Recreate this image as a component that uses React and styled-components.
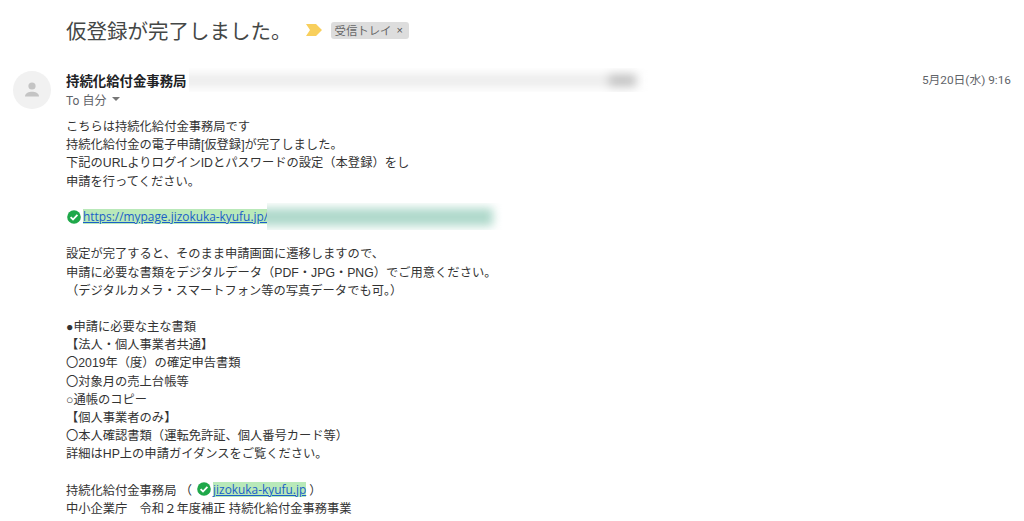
import styled, { createGlobalStyle } from "styled-components";

const lines1 = [
  "こちらは持続化給付金事務局です",
  "持続化給付金の電子申請[仮登録]が完了しました。",
  "下記のURLよりログインIDとパスワードの設定（本登録）をし",
  "申請を行ってください。",
];
const lines2 = [
  "設定が完了すると、そのまま申請画面に遷移しますので、",
  "申請に必要な書類をデジタルデータ（PDF・JPG・PNG）でご用意ください。",
  "（デジタルカメラ・スマートフォン等の写真データでも可。）",
];
const lines3 = [
  "●申請に必要な主な書類",
  "【法人・個人事業者共通】",
  "〇2019年（度）の確定申告書類",
  "〇対象月の売上台帳等",
  "○通帳のコピー",
  "【個人事業者のみ】",
  "〇本人確認書類（運転免許証、個人番号カード等）",
  "詳細はHP上の申請ガイダンスをご覧ください。",
];

const CheckIcon = () => (
  <svg width="14" height="14" viewBox="0 0 14 14">
    <circle cx="7" cy="7" r="6.8" fill="#1fa84a" />
    <path d="M3.6 7.2l2.4 2.3 4.4-4.6" fill="none" stroke="#fff" strokeWidth="1.8" />
  </svg>
);

const App = () => {
  return (
    <>
      <GlobalStyle />
      <StPage>
        <StSubjectRow>
          <StSubject>仮登録が完了しました。</StSubject>
          <StMarker width="16" height="12" viewBox="0 0 16 12">
            <path d="M0 0h10l6 6-6 6H0l4-6z" fill="#f8cf5c" />
          </StMarker>
          <StChip>受信トレイ<StChipClose>×</StChipClose></StChip>
        </StSubjectRow>
        <StMessage>
          <StAvatar>
            <svg width="20" height="20" viewBox="0 0 20 20">
              <circle cx="10" cy="6" r="3.6" fill="#c4c4c4" />
              <path d="M3 16.5c0-3.4 4-4.8 7-4.8s7 1.4 7 4.8z" fill="#c4c4c4" />
            </svg>
          </StAvatar>
          <StContent>
            <StHeader>
              <StSenderBlock>
                <StSenderRow>
                  <StSender>持続化給付金事務局</StSender>
                  <StSenderMask>
                    <StSenderBlur><StBlurBlob /></StSenderBlur>
                  </StSenderMask>
                </StSenderRow>
                <StTo>To 自分<StCaret /></StTo>
              </StSenderBlock>
              <StDate>5月20日(水) 9:16</StDate>
            </StHeader>
            <StBody>
              {lines1.map((line) => <StLine key={line}>{line}</StLine>)}
              <StLine />
              <StLinkLine>
                <StLinkIcon><CheckIcon /></StLinkIcon>
                <StLinkWrap>
                  <StLink>https://mypage.jizokuka-kyufu.jp/c</StLink>
                  <StLinkMask><StLinkBlur /></StLinkMask>
                </StLinkWrap>
              </StLinkLine>
              <StLine />
              {lines2.map((line) => <StLine key={line}>{line}</StLine>)}
              <StLine />
              {lines3.map((line) => <StLine key={line}>{line}</StLine>)}
              <StLine />
              <StLinkLine>
                <span>持続化給付金事務局 （</span>
                <StFooterIcon><CheckIcon /></StFooterIcon>
                <StLinkWrap>
                  <StLink>jizokuka-kyufu.jp</StLink>
                </StLinkWrap>
                <StClose>）</StClose>
              </StLinkLine>
              <StLine>中小企業庁　令和２年度補正 持続化給付金事務事業</StLine>
            </StBody>
          </StContent>
        </StMessage>
      </StPage>
    </>
  );
};

export default App;

const GlobalStyle = createGlobalStyle`
  html, body {
    margin: 0;
    padding: 0;
    height: 521px;
    overflow: hidden;
    background: #fff;
  }
`;
const StPage = styled.div`
  width: 1024px;
  height: 521px;
  overflow: hidden;
  font-family: "Liberation Sans", "Noto Sans CJK JP", sans-serif;
  color: #333;
`;
const StSubjectRow = styled.div`
  display: flex;
  align-items: center;
  height: 60px;
  padding-left: 66px;
`;
const StSubject = styled.h1`
  margin: 0;
  font-size: 20.5px;
  font-weight: 400;
  color: #444746;
  font-family: "Noto Sans CJK JP", sans-serif;
`;
const StMarker = styled.svg`
  margin-left: 14px;
`;
const StChip = styled.span`
  display: flex;
  align-items: center;
  height: 17px;
  margin-left: 9px;
  padding: 0 6px 0 4px;
  border-radius: 3px;
  background: #dddddd;
  color: #666;
  font-size: 11.4px;
`;
const StChipClose = styled.span`
  margin-left: 5px;
  font-size: 11px;
  color: #555;
`;
const StMessage = styled.div`
  display: flex;
  padding: 11px 13px 0;
`;
const StAvatar = styled.div`
  display: flex;
  flex: none;
  align-items: center;
  justify-content: center;
  width: 38px;
  height: 38px;
  border-radius: 50%;
  background: #f1f1f1;
`;
const StContent = styled.div`
  flex: 1;
  margin-left: 15px;
`;
const StHeader = styled.div`
  display: flex;
  justify-content: space-between;
`;
const StSenderBlock = styled.div`
  display: flex;
  flex-direction: column;
`;
const StSenderRow = styled.div`
  display: flex;
  align-items: center;
  height: 18px;
`;
const StSender = styled.span`
  font-size: 13.4px;
  font-weight: 700;
  color: #202124;
`;
const StSenderMask = styled.div`
  flex: none;
  width: 470px;
  height: 24px;
  margin-left: 2px;
  overflow: hidden;
`;
const StSenderBlur = styled.div`
  position: relative;
  width: 460px;
  height: 13px;
  margin: 6px 0 0 -10px;
  background: #ececec;
  filter: blur(5px);
`;
const StBlurBlob = styled.div`
  position: absolute;
  right: 4px;
  top: 0;
  width: 26px;
  height: 13px;
  background: #c4c4c4;
`;
const StTo = styled.div`
  display: flex;
  align-items: center;
  height: 18px;
  margin-top: 1px;
  font-size: 12px;
  font-family: Roboto, "Noto Sans CJK JP", sans-serif;
  color: #5f6368;
`;
const StCaret = styled.span`
  width: 0;
  height: 0;
  margin-left: 6px;
  border-left: 4px solid transparent;
  border-right: 4px solid transparent;
  border-top: 4px solid #777;
`;
const StDate = styled.div`
  height: 18px;
  line-height: 18px;
  font-size: 11.8px;
  font-family: Roboto, "Noto Sans CJK JP", sans-serif;
  color: #5f6368;
`;
const StBody = styled.div`
  margin-top: 10px;
  font-size: 12.27px;
  line-height: 18.2px;
  color: #333;
`;
const StLine = styled.div`
  height: 18.2px;
  white-space: nowrap;
`;
const StLinkLine = styled.div`
  display: flex;
  align-items: center;
  height: 18.2px;
  white-space: nowrap;
`;
const StLinkIcon = styled.span`
  flex: none;
  width: 14px;
  height: 14px;
  margin: -3px 2px 0 1px;
  svg { display: block; }
`;
const StFooterIcon = styled.span`
  flex: none;
  width: 14px;
  height: 14px;
  margin: -3px 2px 0 5px;
  svg { display: block; }
`;
const StLinkWrap = styled.span`
  position: relative;
  display: block;
  margin-top: -3px;
`;
const StLink = styled.a`
  display: block;
  background: #b9e9b9;
  color: #1a5fc8;
  text-decoration: underline;
  font-family: "Open Sans", sans-serif;
  font-size: 11.9px;
  line-height: 15px;
`;
const StClose = styled.span`
  margin-left: 3px;
`;
const StLinkMask = styled.span`
  position: absolute;
  left: 184px;
  top: -6px;
  width: 240px;
  height: 27px;
  overflow: hidden;
  background: #fff;
`;
const StLinkBlur = styled.span`
  display: block;
  width: 238px;
  height: 18px;
  margin: 5px 0 0 -12px;
  background: #afd9cb;
  filter: blur(5px);
`;
